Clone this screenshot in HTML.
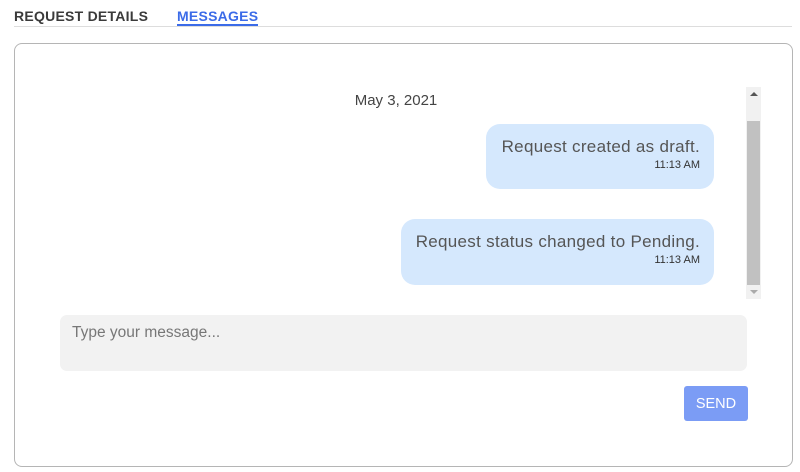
<!DOCTYPE html>
<html><head><style>
*{margin:0;padding:0;box-sizing:border-box}
body{width:800px;height:472px;background:#fff;font-family:"Liberation Sans",sans-serif;position:relative;overflow:hidden;color:#444}
.abs{position:absolute}
.tab{font-weight:bold;font-size:14px;top:8px;letter-spacing:0.25px}
.bub{position:absolute;background:#d5e8fd;border-radius:14px;text-align:right;color:#555}
.bub .t{font-size:17px;letter-spacing:0.3px;position:absolute;right:14px;top:13px;white-space:nowrap}
.bub .s{font-size:11px;position:absolute;right:14px;top:35px;color:#333}
</style></head><body>
<div class="abs tab" style="left:14px;color:#3a3a3a">REQUEST DETAILS</div>
<div class="abs tab" style="left:177px;color:#3b6be8">MESSAGES</div>
<div class="abs" style="left:14px;top:26px;width:778px;height:1px;background:#ddd"></div>
<div class="abs" style="left:177px;top:24px;width:81px;height:2px;background:#3b6be8"></div>
<div class="abs" style="left:14px;top:43px;width:779px;height:424px;border:1px solid #b5b5b5;border-radius:8px"></div>
<div class="abs" style="left:296px;top:92px;width:200px;text-align:center;font-size:15px;color:#444">May 3, 2021</div>
<div class="bub" style="left:486px;top:124px;width:228px;height:65px"><span class="t">Request created as draft.</span><span class="s">11:13 AM</span></div>
<div class="bub" style="left:401px;top:219px;width:313px;height:66px"><span class="t">Request status changed to Pending.</span><span class="s">11:13 AM</span></div>
<div class="abs" style="left:746px;top:87px;width:15px;height:212px;background:#f1f1f1"></div>
<div class="abs" style="left:747px;top:121px;width:13px;height:164px;background:#c1c1c1"></div>
<div class="abs" style="left:750px;top:92px;width:0;height:0;border-left:4px solid transparent;border-right:4px solid transparent;border-bottom:4px solid #555"></div>
<div class="abs" style="left:750px;top:290px;width:0;height:0;border-left:4px solid transparent;border-right:4px solid transparent;border-top:4px solid #aaa"></div>
<div class="abs" style="left:60px;top:315px;width:687px;height:56px;background:#f2f2f2;border-radius:7px"></div>
<div class="abs" style="left:72px;top:324px;font-size:15.5px;color:#777">Type your message...</div>
<div class="abs" style="left:684px;top:386px;width:64px;height:35px;background:#7b9cf5;border-radius:3px;color:#fff;font-size:14.5px;text-align:center;line-height:36px">SEND</div>
</body></html>
